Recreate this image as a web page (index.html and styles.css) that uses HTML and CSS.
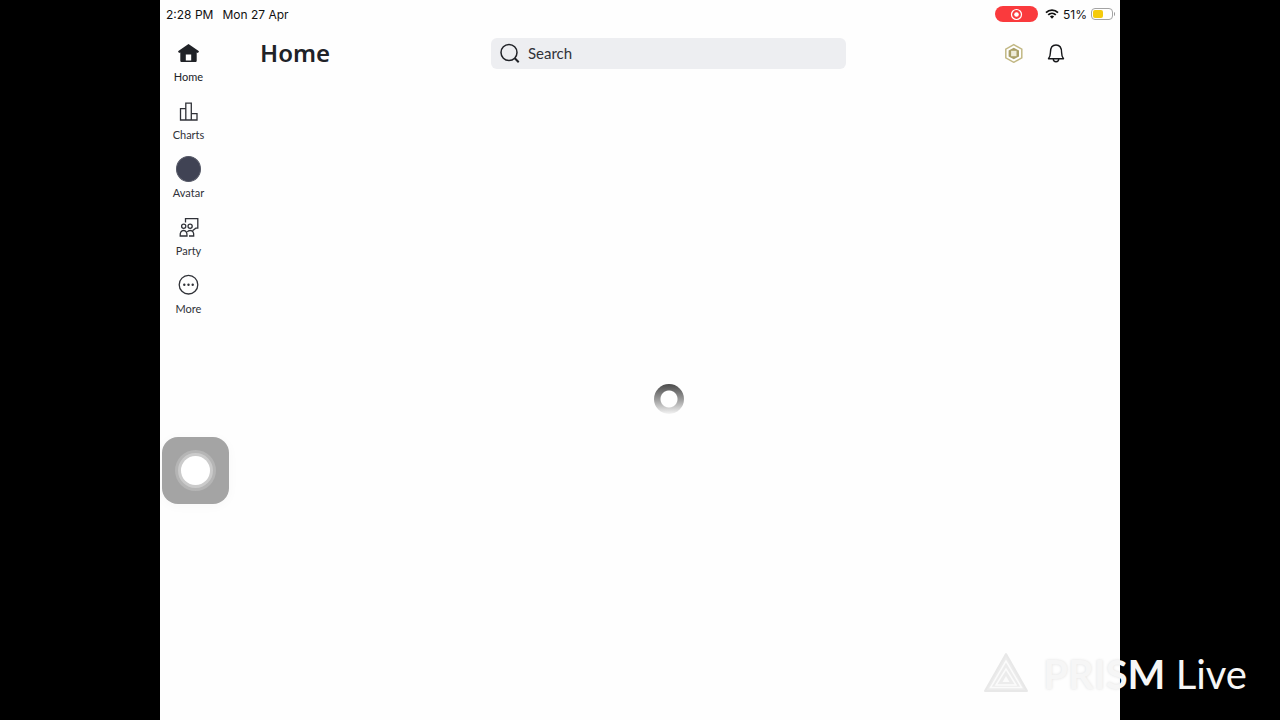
FILE: index.html
```html
<!DOCTYPE html>
<html lang="en">
<head>
  <meta charset="UTF-8">
  <meta name="viewport" content="width=device-width, initial-scale=1.0">
  <title>Home</title>
  <link rel="stylesheet" href="styles.css">
</head>
<body>
  <div class="screen">
    <div class="status-bar">
      <div class="status-left">
        <span>2:28 PM</span>
        <span>Mon 27 Apr</span>
      </div>
      <div class="status-right">
        <span class="recording">
          <svg width="14" height="14" viewBox="0 0 14 14">
            <circle cx="6.500" cy="7.500" r="5" fill="none" stroke="#fff" stroke-width="1.2"/>
            <circle cx="6.500" cy="7.500" r="2.3" fill="#fff"/>
          </svg>
        </span>
        <svg class="wifi" width="14" height="10" viewBox="0 0 14 10">
          <path d="M1 3.6a8.6 8.6 0 0 1 12 0M3.2 5.9a5.5 5.5 0 0 1 7.6 0" fill="none" stroke="#111" stroke-width="1.8"/>
          <path d="M4.9 7.5a3 3 0 0 1 4.2 0L7 9.7z" fill="#111"/>
        </svg>
        <span>51%</span>
        <svg class="battery" width="24" height="12" viewBox="0 0 24 12">
          <rect x=".5" y=".5" width="21" height="11" rx="3.5" fill="#fff" stroke="#a3a3a3"/>
          <rect x="2" y="2" width="10" height="8" rx="2" fill="#f5cb0c"/>
          <path d="M23 4v4c1.200-.6 1.200-3.400 0-4z" fill="#8a8a8a"/>
        </svg>
      </div>
    </div>

    <div class="app">
      <nav class="sidebar">
        <a class="nav-item active" href="#home">
          <svg width="26" height="26" viewBox="0 0 26 26">
            <path d="M12.500 4L2 11.300l1 1.600 1.300-.5V20.500c0 1 .5 1.500 1.500 1.500h13.400c1 0 1.500-.5 1.500-1.500v-8.100l1.300.5 1-1.600z" fill="#202227"/>
            <path d="M9.800 14.500h5.400v6H9.800z" fill="#fff"/>
          </svg>
          <span>Home</span>
        </a>
        <a class="nav-item" href="#charts">
          <svg width="26" height="26" viewBox="0 0 26 26">
            <path d="M4.500 22V10.700h5.300V22zM9.800 22V5.200h5.500V22M15.300 15.700h5.700V22H4.500" class="line"/>
          </svg>
          <span>Charts</span>
        </a>
        <a class="nav-item" href="#avatar">
          <span class="avatar"></span>
          <span>Avatar</span>
        </a>
        <a class="nav-item" href="#party">
          <svg width="26" height="26" viewBox="0 0 26 26">
            <path d="M9.500 8.500V4.700H21.800v9.500h-2l-3.300 2.500" class="line"/>
            <circle cx="7.700" cy="12.300" r="2.100" class="line"/>
            <circle cx="14.100" cy="12.300" r="2.100" class="line"/>
            <path d="M4.200 22c-.3-3.700 1.100-5.500 3.400-5.500s3.600 1.800 3.400 5.500zM13 22h4.700c.3-3.700-1-5.500-3.500-5.500-1.300 0-2.300.5-2.900 1.500" class="line"/>
          </svg>
          <span>Party</span>
        </a>
        <a class="nav-item" href="#more">
          <svg width="26" height="26" viewBox="0 0 26 26">
            <circle cx="12.500" cy="12.700" r="9.300" class="line"/>
            <circle cx="8.300" cy="12.700" r="1.200" fill="#303238"/>
            <circle cx="12.500" cy="12.700" r="1.200" fill="#303238"/>
            <circle cx="16.700" cy="12.700" r="1.200" fill="#303238"/>
          </svg>
          <span>More</span>
        </a>
      </nav>

      <div class="main">
        <header class="header">
          <h1>Home</h1>
          <label class="search">
            <svg width="20" height="20" viewBox="0 0 20 20">
              <circle cx="9" cy="9.500" r="8" fill="none" stroke="#202227" stroke-width="1.500"/>
              <path d="M14.800 15.300l3.900 3.900" stroke="#202227" stroke-width="2"/>
            </svg>
            <input type="text" placeholder="Search" aria-label="Search">
          </label>
          <div class="actions">
            <button type="button" aria-label="Robux">
              <svg width="20" height="20" viewBox="0 0 20 20">
                <path d="M9.800 1.700l8 4.500v8.600l-8 4.500-8-4.500V6.200z" fill="#fff" stroke="#c2b884" stroke-width="1.500"/>
                <path d="M9.800 4.700l5.200 2.900v5.800l-5.200 2.900-5.200-2.900V7.600z" fill="#aaa068"/>
                <path d="M7.100 7.800h5.400v5.400H7.100z" fill="#eeebd8"/>
              </svg>
            </button>
            <button type="button" aria-label="Notifications">
              <svg width="20" height="20" viewBox="0 0 20 20">
                <path d="M2.500 15.800c1.400-1.800 1.900-3.300 1.900-6.300C4.400 4.500 6.300 2 10 2s5.600 2.500 5.600 7.500c0 3 .5 4.500 1.900 6.300z" fill="none" stroke="#17181b" stroke-width="1.400" stroke-linejoin="round"/>
                <path d="M7.300 16a2.700 2.700 0 0 0 5.400 0" fill="none" stroke="#17181b" stroke-width="1.400"/>
              </svg>
            </button>
          </div>
        </header>
        <main class="content">
          <div class="spinner"></div>
        </main>
      </div>
    </div>

    <button type="button" class="assistive" aria-label="AssistiveTouch"><span></span></button>
  </div>

  <div class="watermark">
    <svg width="44" height="40" viewBox="0 0 44 40">
      <path d="M22 2L43 39H1z" fill="#ececec" stroke="#e8e8e8" stroke-width="2" stroke-linejoin="round"/>
      <path d="M22 9L37.500 35.500H6.500zM22 17L32 33H12z" fill="none" stroke="#fbfbfb" stroke-width="1.500"/>
      <path d="M22 24l3.500 6h-7z" fill="#fbfbfb"/>
    </svg>
    <span><b>PRISM</b> Live</span>
  </div>
</body>
</html>
```

FILE: styles.css
```css
* {
  margin: 0;
  padding: 0;
  box-sizing: border-box;
}

body {
  position: relative;
  min-height: 100vh;
  display: flex;
  justify-content: center;
  background: #000;
  color: #202227;
  font-family: Lato, sans-serif;
  overflow: hidden;
}

button {
  border: none;
  background: none;
  cursor: pointer;
}

.screen {
  position: relative;
  width: 75%;
  min-height: 100vh;
  display: flex;
  flex-direction: column;
  background: #fefefe;
}

/* status bar */
.status-bar {
  display: flex;
  justify-content: space-between;
  align-items: center;
  height: 28px;
  padding: 0 5px 0 6px;
  font-family: Inter, sans-serif;
  font-size: 12px;
  color: #111;
}

.status-left {
  display: flex;
  gap: 9px;
}

.status-right {
  display: flex;
  align-items: center;
}

.recording {
  display: flex;
  align-items: center;
  justify-content: center;
  width: 43px;
  height: 16px;
  margin-right: 7px;
  border-radius: 8px;
  background: #fa3a3d;
}

.wifi {
  margin-right: 4px;
}

.battery {
  margin-left: 4px;
}

.app {
  flex: 1;
  display: flex;
}

/* sidebar */
.sidebar {
  width: 57px;
  padding-top: 12px;
  display: flex;
  flex-direction: column;
  gap: 14px;
}

.nav-item {
  display: flex;
  flex-direction: column;
  align-items: center;
  gap: 4px;
  color: #303238;
  font-size: 11px;
  line-height: 14px;
  text-decoration: none;
}

.nav-item.active {
  color: #202227;
}

.line {
  fill: none;
  stroke: #303238;
  stroke-width: 1.3;
}

.avatar {
  width: 25px;
  height: 26px;
  border: 1px solid #555866;
  border-radius: 50%;
  background: #404354;
}

/* main */
.main {
  flex: 1;
  display: flex;
  flex-direction: column;
}

.header {
  display: grid;
  grid-template-columns: 1fr minmax(0, 355px) 1fr;
  align-items: center;
  height: 50px;
  padding: 0 43px;
}

.header h1 {
  font-family: "Noto Sans", sans-serif;
  font-size: 24px;
  font-weight: 600;
  line-height: 32px;
}

.search {
  display: flex;
  align-items: center;
  gap: 8px;
  height: 31px;
  padding: 0 9px;
  border-radius: 6px;
  background: #edeef1;
}

.search input {
  flex: 1;
  min-width: 0;
  border: none;
  outline: none;
  background: none;
  color: #202227;
  font-family: Lato, sans-serif;
  font-size: 15px;
}

.search input::placeholder {
  color: #303238;
}

.actions {
  display: flex;
  justify-content: flex-end;
}

.actions button {
  display: flex;
  align-items: center;
  justify-content: center;
  width: 42px;
  height: 32px;
}

.content {
  flex: 1;
  display: flex;
  align-items: center;
  justify-content: center;
}

.spinner {
  width: 30px;
  height: 30px;
  border-radius: 50%;
  background: radial-gradient(circle, #fefefe 8px, transparent 9px), linear-gradient(#4a4a4a, #999 50%, #f4f4f4);
}

/* floating button */
.assistive {
  position: absolute;
  left: 2px;
  top: 437px;
  display: flex;
  align-items: center;
  justify-content: center;
  width: 67px;
  height: 67px;
  border-radius: 16px;
  background: #a4a4a4;
  box-shadow: 0 2px 12px rgba(0, 0, 0, 0.03);
}

.assistive span {
  width: 29px;
  height: 29px;
  border-radius: 50%;
  background: #fff;
  box-shadow: 0 0 0 3px #cbcbcb, 0 0 0 6px #b5b5b5;
}

.watermark {
  position: absolute;
  right: 33px;
  bottom: 22px;
  display: flex;
  align-items: center;
  gap: 15px;
  color: #f6f6f6;
  font-size: 40px;
  line-height: 48px;
  text-shadow: 0 0 3px rgba(0, 0, 0, 0.12);
}

.watermark svg {
  margin-bottom: 4px;
}
```
